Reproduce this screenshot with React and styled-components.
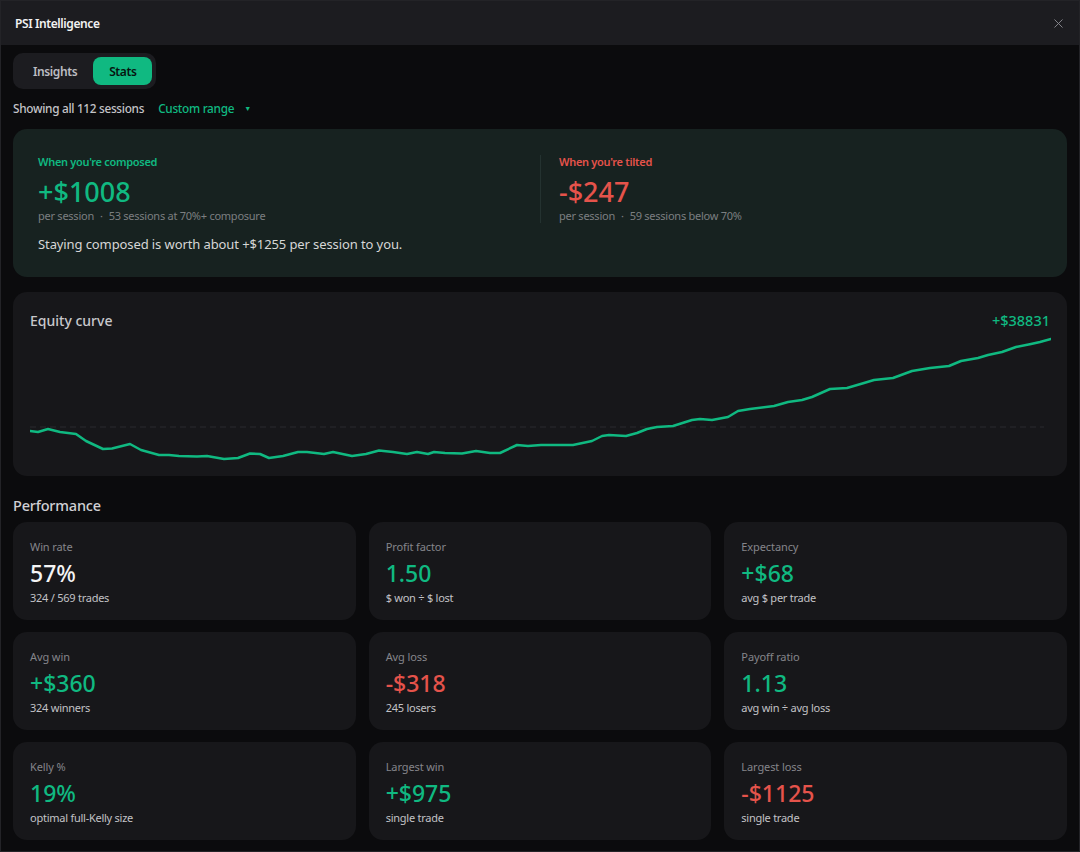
import styled, { createGlobalStyle } from "styled-components";
import { X } from "lucide-react";

const GREEN = "#10b981";
const RED = "#e5534b";

const GlobalStyle = createGlobalStyle`
  html, body {
    margin: 0;
    padding: 0;
    background: #0b0b0d;
  }
  * {
    box-sizing: border-box;
  }
`;

const Frame = styled("div")({
  width: "1080px",
  height: "852px",
  overflow: "hidden",
  background: "#0b0b0d",
  border: "1px solid #232327",
  fontFamily: '"Segoe UI", "Noto Sans", "Open Sans", sans-serif',
  color: "#e6e6e6",
  display: "flex",
  flexDirection: "column",
});

const Header = styled("div")({
  height: "44px",
  flexShrink: 0,
  background: "#1c1c20",
  display: "flex",
  alignItems: "center",
  justifyContent: "space-between",
  padding: "0 13px 0 14px",
});

const Title = styled("div")({
  fontSize: "12px",
  fontWeight: 600,
  letterSpacing: "-0.4px",
  color: "#f2f2f2",
});

const CloseButton = styled("button")({
  background: "none",
  border: "none",
  padding: 0,
  color: "#8a8a90",
  display: "flex",
  cursor: "pointer",
});

const Body = styled("div")({
  padding: "8px 12px 0",
  display: "flex",
  flexDirection: "column",
});

const Tabs = styled("div")({
  alignSelf: "flex-start",
  display: "flex",
  padding: "4px",
  background: "#1c1c20",
  borderRadius: "10px",
});

const Tab = styled("button")`
  height: 28px;
  padding: 0 16px;
  border: none;
  border-radius: 8px;
  font-family: inherit;
  font-size: 12px;
  font-weight: 600;
  letter-spacing: -0.4px;
  cursor: pointer;
  background: ${(p) => (p.$active ? GREEN : "transparent")};
  color: ${(p) => (p.$active ? "#07140f" : "#bdbdc2")};
`;

const FilterRow = styled("div")({
  marginTop: "10px",
  height: "18px",
  display: "flex",
  alignItems: "center",
  gap: "14px",
  fontSize: "11.8px",
  fontWeight: 500,
  letterSpacing: "-0.3px",
});

const Muted = styled("span")({
  color: "#c4c4c8",
});

const RangePicker = styled("span")({
  color: GREEN,
  display: "flex",
  alignItems: "center",
  gap: "10px",
});

const Caret = styled("span")({
  fontSize: "7px",
});

const ComposureCard = styled("div")({
  marginTop: "12px",
  background: "#172220",
  borderRadius: "14px",
  padding: "26px 25px 24px",
});

const ComposureGrid = styled("div")({
  display: "grid",
  gridTemplateColumns: "1fr 1fr",
});

const ComposureCol = styled("div")`
  display: flex;
  flex-direction: column;
  ${(p) => p.$divided && `border-left: 1px solid #243230; padding-left: 18px;`}
`;

const SmallLabel = styled("div")`
  font-size: 11px;
  line-height: 14px;
  font-weight: 600;
  letter-spacing: -0.3px;
  color: ${(p) => p.color};
`;

const BigValue = styled("div")`
  margin-top: 7px;
  font-size: 27px;
  line-height: 32px;
  font-weight: 500;
  color: ${(p) => p.color};
`;

const Caption = styled("div")({
  marginTop: "1px",
  fontSize: "11px",
  lineHeight: "14px",
  letterSpacing: "-0.25px",
  color: "#7c7f80",
});

const Dot = styled("span")({
  margin: "0 6px",
});

const Summary = styled("div")({
  marginTop: "12px",
  fontSize: "13px",
  lineHeight: "18px",
  letterSpacing: "-0.1px",
  color: "#d6d6d6",
});

const Panel = styled("div")({
  marginTop: "15px",
  background: "#17171a",
  borderRadius: "14px",
  padding: "18px 17px 11px",
});

const PanelHead = styled("div")({
  display: "flex",
  justifyContent: "space-between",
  alignItems: "center",
  height: "20px",
  fontSize: "14px",
  fontWeight: 500,
});

const PanelTitle = styled("span")({
  color: "#c8c8cc",
});

const PanelTotal = styled("span")({
  color: GREEN,
  fontSize: "14.5px",
});

const Chart = styled("svg")({
  display: "block",
  marginTop: "5px",
  width: "1021px",
  height: "130px",
});

const SectionTitle = styled("div")({
  marginTop: "19px",
  fontSize: "14.5px",
  lineHeight: "20px",
  fontWeight: 500,
  letterSpacing: "-0.2px",
  color: "#d0d0d4",
});

const StatGrid = styled("div")({
  marginTop: "7px",
  display: "grid",
  gridTemplateColumns: "repeat(3, 1fr)",
  columnGap: "13px",
  rowGap: "12px",
});

const StatCard = styled("div")({
  height: "98px",
  background: "#17171a",
  borderRadius: "14px",
  padding: "18px 17px 15px",
  display: "flex",
  flexDirection: "column",
});

const StatLabel = styled("div")({
  fontSize: "11px",
  lineHeight: "14px",
  letterSpacing: "-0.1px",
  color: "#85858a",
});

const StatValue = styled("div")`
  margin-top: 5px;
  font-size: 23px;
  line-height: 28px;
  font-weight: 500;
  color: ${(p) => p.color};
`;

const StatNote = styled("div")({
  marginTop: "4px",
  fontSize: "11px",
  lineHeight: "14px",
  letterSpacing: "-0.25px",
  color: "#c2c2c6",
});

// equity samples in page pixels, shifted into the chart box below
const curve = [
  [30, 431], [38, 432], [48, 429], [60, 432], [76, 434], [86, 441], [103, 449],
  [112, 448.5], [130, 444], [141, 450], [159, 455], [169, 455], [179, 456],
  [197, 456.5], [207, 456], [224, 459], [238, 458], [250, 453.5], [260, 454],
  [269, 458], [283, 456], [298, 452], [307, 452], [324, 454], [333, 452],
  [352, 456], [366, 454], [379, 450.5], [393, 452], [407, 454], [417, 452],
  [428, 454], [434, 452], [445, 453], [462, 453.5], [476, 451], [490, 453],
  [500, 453], [517, 445], [528, 446], [541, 445], [573, 445], [592, 441],
  [602, 436], [609, 435], [626, 436], [637, 433], [647, 429], [657, 427],
  [673, 426], [692, 420], [700, 419], [712, 420], [728, 417], [738, 411],
  [750, 409], [774, 406], [788, 402], [802, 400], [812, 397], [830, 389],
  [847, 388], [864, 383], [874, 380], [893, 378], [912, 371], [930, 368],
  [949, 366], [961, 361], [978, 358], [988, 355], [1002, 352], [1016, 347],
  [1031, 344], [1040, 342], [1051, 339],
];

const linePoints = curve.map(([x, y]) => `${x - 30},${y - 335}`).join(" ");

const stats = [
  { label: "Win rate", value: "57%", note: "324 / 569 trades", color: "#f4f4f4" },
  { label: "Profit factor", value: "1.50", note: "$ won ÷ $ lost", color: GREEN },
  { label: "Expectancy", value: "+$68", note: "avg $ per trade", color: GREEN },
  { label: "Avg win", value: "+$360", note: "324 winners", color: GREEN },
  { label: "Avg loss", value: "-$318", note: "245 losers", color: RED },
  { label: "Payoff ratio", value: "1.13", note: "avg win ÷ avg loss", color: GREEN },
  { label: "Kelly %", value: "19%", note: "optimal full-Kelly size", color: GREEN },
  { label: "Largest win", value: "+$975", note: "single trade", color: GREEN },
  { label: "Largest loss", value: "-$1125", note: "single trade", color: RED },
];

const App = () => {
  return (
    <Frame>
      <GlobalStyle />
      <Header>
        <Title>PSI Intelligence</Title>
        <CloseButton aria-label="Close">
          <X size={15} strokeWidth={1.5} />
        </CloseButton>
      </Header>
      <Body>
        <Tabs>
          <Tab>Insights</Tab>
          <Tab $active>Stats</Tab>
        </Tabs>

        <FilterRow>
          <Muted>Showing all 112 sessions</Muted>
          <RangePicker>
            Custom range <Caret>▼</Caret>
          </RangePicker>
        </FilterRow>

        <ComposureCard>
          <ComposureGrid>
            <ComposureCol>
              <SmallLabel color={GREEN}>When you're composed</SmallLabel>
              <BigValue color={GREEN}>+$1008</BigValue>
              <Caption>
                per session<Dot>·</Dot>53 sessions at 70%+ composure
              </Caption>
            </ComposureCol>
            <ComposureCol $divided>
              <SmallLabel color={RED}>When you're tilted</SmallLabel>
              <BigValue color={RED}>-$247</BigValue>
              <Caption>
                per session<Dot>·</Dot>59 sessions below 70%
              </Caption>
            </ComposureCol>
          </ComposureGrid>
          <Summary>Staying composed is worth about +$1255 per session to you.</Summary>
        </ComposureCard>

        <Panel>
          <PanelHead>
            <PanelTitle>Equity curve</PanelTitle>
            <PanelTotal>+$38831</PanelTotal>
          </PanelHead>
          <Chart viewBox="0 0 1021 130">
            <line
              x1="0"
              y1="92"
              x2="1014"
              y2="92"
              stroke="#2a2a2f"
              strokeWidth="1"
              strokeDasharray="6 4"
            />
            <polyline
              points={linePoints}
              fill="none"
              stroke={GREEN}
              strokeWidth="2.5"
              strokeLinejoin="round"
              strokeLinecap="round"
            />
          </Chart>
        </Panel>

        <SectionTitle>Performance</SectionTitle>
        <StatGrid>
          {stats.map((s) => (
            <StatCard key={s.label}>
              <StatLabel>{s.label}</StatLabel>
              <StatValue color={s.color}>{s.value}</StatValue>
              <StatNote>{s.note}</StatNote>
            </StatCard>
          ))}
        </StatGrid>
      </Body>
    </Frame>
  );
};

export default App;
